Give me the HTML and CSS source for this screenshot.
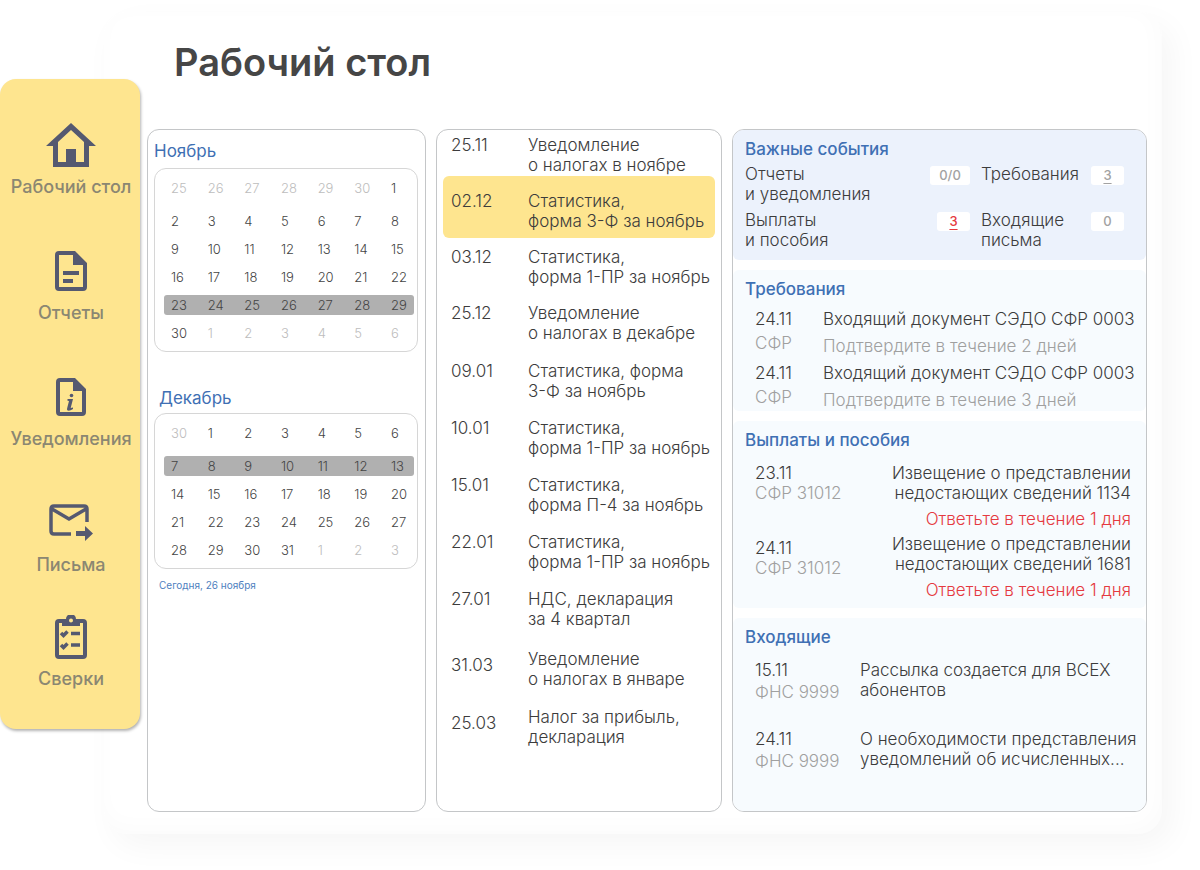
FILE: index.html
```html
<!DOCTYPE html>
<html lang="ru">
<head>
    <meta charset="UTF-8">
    <meta name="viewport" content="width=device-width, initial-scale=1.0">
    <title>Рабочий стол</title>
    <link rel="stylesheet" href="styles.css">
</head>
<body>
    <div class="app">
        <nav class="sidebar">
            <a class="nav-link" href="#">
                <svg class="nav-icon" width="52" height="44" viewBox="0 0 52 44">
                    <path fill-rule="evenodd" d="M26 0L51 23H44V44H8V23H1ZM26 7L13 19V39H39V19Z"/>
                    <rect x="21" y="26" width="10" height="14"/>
                </svg>
                <span>Рабочий стол</span>
            </a>
            <a class="nav-link" href="#">
                <svg class="nav-icon" width="32" height="40" viewBox="0 0 32 40">
                    <path fill-rule="evenodd" d="M4 0H20L32 12V36Q32 40 28 40H4Q0 40 0 36V4Q0 0 4 0ZM4 4V36H28V14H18V4Z"/>
                    <rect x="8" y="20" width="16" height="4"/>
                    <rect x="8" y="28" width="10" height="4"/>
                </svg>
                <span>Отчеты</span>
            </a>
            <a class="nav-link" href="#">
                <svg class="nav-icon" width="30" height="38" viewBox="0 0 30 38">
                    <path fill-rule="evenodd" d="M4 0H19L30 11V34Q30 38 26 38H4Q0 38 0 34V4Q0 0 4 0ZM4 4V34H26V13H17V4Z"/>
                    <circle cx="15.500" cy="17.500" r="1.800"/>
                    <path d="M11.500 21H17L14.700 30L17 29.500V31Q13 33.500 11.300 32.200Q10.700 31.500 11.200 30L13 23L11.500 22.700Z"/>
                </svg>
                <span>Уведомления</span>
            </a>
            <a class="nav-link" href="#">
                <svg class="nav-icon" width="44" height="38" viewBox="0 0 44 38">
                    <path class="icon-line" d="M22 30H5Q2 30 2 27V5Q2 2 5 2H35Q38 2 38 5V18M3 5L20 15L37 5"/>
                    <path d="M27 27H36V22L44 29.500L36 37V32H27Z"/>
                </svg>
                <span>Письма</span>
            </a>
            <a class="nav-link nav-link-last" href="#">
                <svg class="nav-icon" width="32" height="44" viewBox="0 0 32 44">
                    <path fill-rule="evenodd" d="M4 4H11A5 5 0 0 1 21 4H28Q32 4 32 8V40Q32 44 28 44H4Q0 44 0 40V8Q0 4 4 4ZM4 8V40H28V8H25V11H7V8ZM16 3.500A2 2 0 0 0 16 7.500A2 2 0 0 0 16 3.500Z"/>
                    <path class="icon-line" d="M6 18L8.500 20.500L12.500 16.500M6 30L8.500 32.500L12.500 28.500M16 18.500H25M16 30H25"/>
                </svg>
                <span>Сверки</span>
            </a>
        </nav>

        <main class="desktop">
            <h1>Рабочий стол</h1>

            <div class="columns">
                <section class="panel calendars">
                    <h2 class="month">Ноябрь</h2>
                    <div class="calendar">
                        <table>
                            <tr><td class="off">25</td><td class="off">26</td><td class="off">27</td><td class="off">28</td><td class="off">29</td><td class="off">30</td><td>1</td></tr>
                            <tr><td>2</td><td>3</td><td>4</td><td>5</td><td>6</td><td>7</td><td>8</td></tr>
                            <tr><td>9</td><td>10</td><td>11</td><td>12</td><td>13</td><td>14</td><td>15</td></tr>
                            <tr><td>16</td><td>17</td><td>18</td><td>19</td><td>20</td><td>21</td><td>22</td></tr>
                            <tr class="week"><td>23</td><td>24</td><td>25</td><td>26</td><td>27</td><td>28</td><td>29</td></tr>
                            <tr><td>30</td><td class="off">1</td><td class="off">2</td><td class="off">3</td><td class="off">4</td><td class="off">5</td><td class="off">6</td></tr>
                        </table>
                    </div>
                    <h2 class="month month-next">Декабрь</h2>
                    <div class="calendar">
                        <table>
                            <tr><td class="off">30</td><td>1</td><td>2</td><td>3</td><td>4</td><td>5</td><td>6</td></tr>
                            <tr class="week"><td>7</td><td>8</td><td>9</td><td>10</td><td>11</td><td>12</td><td>13</td></tr>
                            <tr><td>14</td><td>15</td><td>16</td><td>17</td><td>18</td><td>19</td><td>20</td></tr>
                            <tr><td>21</td><td>22</td><td>23</td><td>24</td><td>25</td><td>26</td><td>27</td></tr>
                            <tr><td>28</td><td>29</td><td>30</td><td>31</td><td class="off">1</td><td class="off">2</td><td class="off">3</td></tr>
                        </table>
                    </div>
                    <p class="today">Сегодня, 26 ноября</p>
                </section>

                <section class="panel deadlines">
                    <ul class="deadline-group">
                        <li class="deadline"><time>25.11</time><span>Уведомление<br>о налогах в ноябре</span></li>
                        <li class="deadline deadline-active"><time>02.12</time><span>Статистика,<br>форма 3-Ф за ноябрь</span></li>
                        <li class="deadline"><time>03.12</time><span>Статистика,<br>форма 1-ПР за ноябрь</span></li>
                        <li class="deadline"><time>25.12</time><span>Уведомление<br>о налогах в декабре</span></li>
                    </ul>
                    <ul class="deadline-group january">
                        <li class="deadline"><time>09.01</time><span>Статистика, форма<br>3-Ф за ноябрь</span></li>
                        <li class="deadline"><time>10.01</time><span>Статистика,<br>форма 1-ПР за ноябрь</span></li>
                        <li class="deadline"><time>15.01</time><span>Статистика,<br>форма П-4 за ноябрь</span></li>
                        <li class="deadline"><time>22.01</time><span>Статистика,<br>форма 1-ПР за ноябрь</span></li>
                        <li class="deadline"><time>27.01</time><span>НДС, декларация<br>за 4 квартал</span></li>
                    </ul>
                    <ul class="deadline-group march">
                        <li class="deadline"><time>31.03</time><span>Уведомление<br>о налогах в январе</span></li>
                        <li class="deadline"><time>25.03</time><span>Налог за прибыль,<br>декларация</span></li>
                    </ul>
                </section>

                <div class="panel events">
                    <section class="block summary">
                        <h2>Важные события</h2>
                        <div class="counters">
                            <span>Отчеты<br>и уведомления</span>
                            <span class="badge badge-wide">0/0</span>
                            <span>Требования</span>
                            <a class="badge" href="#">3</a>
                            <span>Выплаты<br>и пособия</span>
                            <a class="badge badge-alert" href="#">3</a>
                            <span>Входящие<br>письма</span>
                            <span class="badge">0</span>
                        </div>
                    </section>

                    <section class="block requirements">
                        <h2>Требования</h2>
                        <div class="entry">
                            <div class="entry-date"><time>24.11</time><small>СФР</small></div>
                            <div class="entry-text"><p>Входящий документ СЭДО СФР 0003</p><p class="hint">Подтвердите в течение 2 дней</p></div>
                        </div>
                        <div class="entry">
                            <div class="entry-date"><time>24.11</time><small>СФР</small></div>
                            <div class="entry-text"><p>Входящий документ СЭДО СФР 0003</p><p class="hint">Подтвердите в течение 3 дней</p></div>
                        </div>
                    </section>

                    <section class="block payments">
                        <h2>Выплаты и пособия</h2>
                        <div class="entry">
                            <div class="entry-date"><time>23.11</time><small>СФР 31012</small></div>
                            <div class="entry-text"><p>Извещение о представлении<br>недостающих сведений 1134</p><p class="alert">Ответьте в течение 1 дня</p></div>
                        </div>
                        <div class="entry">
                            <div class="entry-date"><time>24.11</time><small>СФР 31012</small></div>
                            <div class="entry-text"><p>Извещение о представлении<br>недостающих сведений 1681</p><p class="alert">Ответьте в течение 1 дня</p></div>
                        </div>
                    </section>

                    <section class="block inbox">
                        <h2>Входящие</h2>
                        <div class="entry">
                            <div class="entry-date"><time>15.11</time><small>ФНС 9999</small></div>
                            <div class="entry-text"><p>Рассылка создается для ВСЕХ<br>абонентов</p></div>
                        </div>
                        <div class="entry">
                            <div class="entry-date"><time>24.11</time><small>ФНС 9999</small></div>
                            <div class="entry-text"><p>О необходимости представления<br>уведомлений об исчисленных...</p></div>
                        </div>
                    </section>
                </div>
            </div>
        </main>
    </div>
</body>
</html>
```
FILE: styles.css
```css
* {
    box-sizing: border-box;
}

body {
    margin: 0;
    background-color: #fff;
    color: #3c3c3c;
    font-family: Inter, "Liberation Sans", sans-serif;
    font-size: 17px;
    font-weight: 300;
    line-height: 20px;
}

h1, h2, p, ul {
    margin: 0;
    padding: 0;
}

.app {
    display: flex;
    align-items: flex-start;
    padding: 12px 38px 38px 0;
}

/* Sidebar */
.sidebar {
    position: relative;
    z-index: 1;
    flex: 0 0 140px;
    margin-top: 67px;
    padding: 44px 0 39px 2px;
    border-radius: 16px;
    background-color: #fee58f;
    box-shadow: 1px 2px 3px rgba(0, 0, 0, 0.3);
}

.nav-link {
    display: flex;
    flex-direction: column;
    align-items: center;
    gap: 9px;
    color: #8b8772;
    font-size: 18px;
    font-weight: 500;
    line-height: 22px;
    text-decoration: none;
    white-space: nowrap;
}

.nav-link + .nav-link {
    margin-top: 51px;
}

.nav-link + .nav-link-last {
    margin-top: 39px;
}

.nav-icon {
    height: 44px;
    fill: #555970;
}

.icon-line {
    fill: none;
    stroke: #555970;
    stroke-width: 3.5;
}

/* Main sheet, slides under the sidebar */
.desktop {
    flex: 1;
    min-width: 0;
    margin-left: -36px;
    padding: 30px 15px 22px 43px;
    border-radius: 24px;
    box-shadow: 10px 12px 32px rgba(0, 0, 0, 0.04), inset -4px -6px 24px rgba(0, 0, 0, 0.02);
}

h1 {
    padding-left: 27px;
    color: #464646;
    font-size: 38px;
    font-weight: 600;
    line-height: 40px;
}

.columns {
    display: grid;
    grid-template-columns: 279fr 286fr 415fr;
    gap: 10px;
    margin-top: 47px;
}

.panel {
    min-width: 0;
    border: 1px solid #c4c6c8;
    border-radius: 12px;
    overflow: hidden;
}

/* Calendars */
.calendars {
    padding: 11px 7px 10px 6px;
}

.month {
    color: #3f70b4;
    font-size: 17px;
    font-weight: 400;
}

.month-next {
    margin-top: 36px;
    padding-left: 5px;
}

.calendar {
    margin-top: 7px;
    padding: 1px 3px 0 9px;
    border: 1px solid #d6d6d6;
    border-radius: 12px;
}

.month-next + .calendar {
    margin-top: 5px;
}

.calendar table {
    width: 100%;
    table-layout: fixed;
    border-spacing: 0 8px;
    font-size: 13px;
}

.calendar td {
    height: 20px;
    padding: 0 0 0 7px;
    color: #444;
}

.calendar td:last-child {
    width: 30px;
}

.calendar tr:first-child td {
    height: 25px;
    padding-bottom: 5px;
}

.calendar .off, .calendar tr .off {
    color: #bdbdbd;
}

.week td {
    background-color: #b0b0b0;
}

.week td:first-child {
    border-radius: 3px 0 0 3px;
}

.week td:last-child {
    border-radius: 0 3px 3px 0;
}

.today {
    margin-top: 6px;
    padding-left: 5px;
    color: #4f7fc0;
    font-size: 10px;
    font-weight: 400;
}

/* Deadlines */
.deadlines {
    padding: 5px 6px;
}

.deadline-group {
    display: flex;
    flex-direction: column;
    gap: 16px;
    list-style: none;
}

.january {
    gap: 17px;
    margin-top: 18px;
}

.march {
    gap: 18px;
    margin-top: 20px;
}

.deadline {
    display: flex;
    padding-left: 8px;
    white-space: nowrap;
}

.deadline time {
    flex: 0 0 77px;
}

.march time {
    padding-top: 6px;
}

.deadline-active {
    margin: -15px 0 -7px;
    padding-top: 15px;
    padding-bottom: 7px;
    border-radius: 6px;
    background-color: #fee58f;
}

/* Events */
.events {
    display: flex;
    flex-direction: column;
    gap: 10px;
}

.block {
    padding: 9px 12px 10px;
    border-radius: 6px;
    background-color: #f7fbfe;
}

.block h2 {
    color: #3f70b4;
    font-size: 17px;
    font-weight: 500;
}

.summary {
    background-color: #ecf2fc;
}

.counters {
    display: grid;
    grid-template-columns: 1fr auto 99px 33px;
    gap: 6px 11px;
    margin-top: 5px;
    padding-right: 10px;
}

.badge {
    justify-self: end;
    width: 33px;
    height: 19px;
    margin-top: 2px;
    border-radius: 3px;
    background-color: #fff;
    color: #a2a2a2;
    font-size: 13px;
    font-weight: 500;
    line-height: 19px;
    text-align: center;
    text-underline-offset: 3px;
}

.badge-wide {
    width: 40px;
}

.badge-alert {
    color: #e5393f;
}

.entry {
    display: flex;
    padding-left: 10px;
    white-space: nowrap;
}

.entry-date {
    display: flex;
    flex-direction: column;
}

.entry small {
    color: #a0a0a0;
    font-size: 17px;
}

.hint {
    color: #a0a0a0;
}

.alert {
    margin-top: 6px;
    color: #e5393f;
}

.requirements {
    padding-bottom: 1px;
}

.requirements .entry {
    margin-top: 7px;
}

.requirements h2 {
    margin-bottom: 10px;
}

.payments h2, .inbox h2 {
    margin-bottom: 13px;
}

.requirements .entry-date {
    flex: 0 0 68px;
    gap: 4px;
}

.requirements .hint {
    margin-top: 7px;
}

.payments {
    padding-bottom: 8px;
}

.payments .entry {
    justify-content: space-between;
    padding-right: 3px;
}

.payments .entry + .entry {
    margin-top: 5px;
}

.payments .entry + .entry .entry-date {
    padding-top: 4px;
}

.payments .entry-text {
    text-align: right;
}

.inbox {
    flex: 1;
    padding-bottom: 40px;
}

.inbox .entry-date {
    flex: 0 0 105px;
    gap: 2px;
}

.inbox .entry + .entry {
    margin-top: 27px;
}
```
